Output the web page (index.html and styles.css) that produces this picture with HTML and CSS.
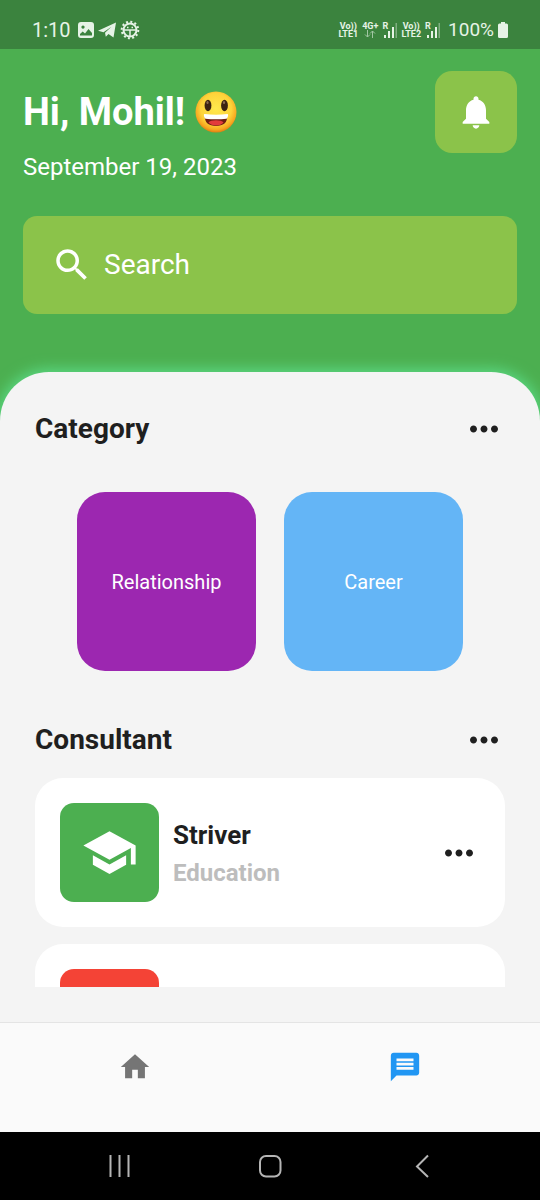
FILE: index.html
```html
<!DOCTYPE html>
<html lang="en">
<head>
<meta charset="utf-8">
<meta name="viewport" content="width=device-width, initial-scale=1">
<title>Consultants</title>
<link rel="stylesheet" href="styles.css">
</head>
<body>
<svg class="defs" aria-hidden="true">
  <symbol id="more" viewBox="0 0 24 24"><path d="M6 10c-1.1 0-2 .9-2 2s.9 2 2 2 2-.9 2-2-.9-2-2-2zm12 0c-1.1 0-2 .9-2 2s.9 2 2 2 2-.9 2-2-.9-2-2-2zm-6 0c-1.1 0-2 .9-2 2s.9 2 2 2 2-.9 2-2-.9-2-2-2z"/></symbol>
  <symbol id="bars" viewBox="0 0 14 16"><path d="M1 13h2v3H1zM5 9h2v7H5zM9 5h2v11H9z"/><path opacity=".4" d="M12.500 1h1.500v15h-1.500z"/></symbol>
</svg>
<div class="app">
  <div class="status">
    <div class="status-left">
      <span class="clock">1:10</span>
      <svg width="16" height="16" viewBox="0 0 16 16"><path fill-rule="evenodd" d="M3 0h10a3 3 0 0 1 3 3v10a3 3 0 0 1-3 3H3a3 3 0 0 1-3-3V3a3 3 0 0 1 3-3zm2 3.500a1.600 1.600 0 1 0 .01 0zM2 13.500h12V11l-3.500-4L7 11.500 4.700 9.500 2 12z"/></svg>
      <svg width="18" height="16" viewBox="0 0 18 16"><path d="M0 8.800 18 .5 15.500 15.500 10.500 12 7.800 14.800 7 10.800 13.500 4.800 5.500 10.200z"/></svg>
      <svg width="20" height="20" viewBox="0 0 20 20" fill="none" stroke="currentColor"><circle cx="10" cy="10" r="6.500" stroke-width="2"/><circle cx="10" cy="10" r="8.300" stroke-width="2" stroke-dasharray="2 2.350"/><path stroke-width="1.500" d="M4 10h12M10 10v6M7 7.500h1.500M11.500 7.500H13"/></svg>
    </div>
    <div class="status-right">
      <span class="net"><span>Vo))</span><span>LTE1</span></span>
      <span class="net"><span>4G+</span><svg width="12" height="8" viewBox="0 0 12 8" fill="none" stroke="currentColor" opacity=".6"><path d="M3.500 0v7M1 4.500 3.500 7 6 4.500M8.500 8V1M6 3.500 8.500 1 11 3.500"/></svg></span>
      <span class="signal"><span class="roam">R</span><svg width="14" height="16"><use href="#bars"/></svg></span>
      <span class="net"><span>Vo))</span><span>LTE2</span></span>
      <span class="signal"><span class="roam">R</span><svg width="14" height="16"><use href="#bars"/></svg></span>
      <span class="level">100%</span>
      <svg width="10" height="16" viewBox="0 0 10 16"><path d="M3 0h4v1.500h1.500A1.500 1.500 0 0 1 10 3v11.500A1.500 1.500 0 0 1 8.500 16h-7A1.500 1.500 0 0 1 0 14.500V3a1.500 1.500 0 0 1 1.500-1.500H3z"/></svg>
    </div>
  </div>

  <header class="header">
    <div class="greeting">
      <div>
        <h1 class="hello">Hi, Mohil!
          <svg width="42" height="42" viewBox="0 0 42 42" role="img" aria-label="grinning face">
            <defs><radialGradient id="face" cx=".5" cy=".42" r=".58"><stop offset="0" stop-color="#ffe94d"/><stop offset=".65" stop-color="#fdd33a"/><stop offset=".88" stop-color="#f7a61f"/><stop offset="1" stop-color="#e07d12"/></radialGradient></defs>
            <circle cx="21" cy="21" r="20.500" fill="url(#face)"/>
            <ellipse cx="13" cy="14.500" rx="3.400" ry="5.800" fill="#3b2412"/><ellipse cx="29.500" cy="14.500" rx="3.400" ry="5.800" fill="#3b2412"/>
            <ellipse cx="12.500" cy="11.500" rx="1.100" ry="1.500" fill="#8a6a50"/><ellipse cx="29" cy="11.500" rx="1.100" ry="1.500" fill="#8a6a50"/>
            <path fill="#6d1d12" d="M10 24.500h22c1 7-4 10.500-11 10.500S9 31.500 10 24.500z"/>
            <path fill="#e23b3b" d="M13.500 31.500c2-3 13-3 15 0-1.500 2-4.500 3-7.500 3s-6-1-7.500-3z"/>
            <path fill="#fff" d="M9.500 23q11.500 1.500 23 0 .8 0 .6 1.500c-.2 1.500-.8 2.700-1.600 3.200q-10.500 1-21 0c-.8-.5-1.400-1.700-1.600-3.200q-.2-1.500.6-1.500z"/>
          </svg>
        </h1>
        <p class="date">September 19, 2023</p>
      </div>
      <button class="bell" type="button" aria-label="Notifications"><svg width="40" height="40" viewBox="0 0 24 24"><path d="M12 22c1.100 0 2-.9 2-2h-4c0 1.100.89 2 2 2zm6-6v-5c0-3.070-1.640-5.640-4.500-6.320V4c0-.83-.67-1.500-1.500-1.500s-1.500.67-1.500 1.500v.68C7.630 5.360 6 7.920 6 11v5l-2 2v1h16v-1l-2-2z"/></svg></button>
    </div>
    <label class="search">
      <svg width="42" height="42" viewBox="0 0 24 24"><path d="M15.500 14h-.79l-.28-.27C15.410 12.590 16 11.110 16 9.500 16 5.910 13.090 3 9.500 3S3 5.910 3 9.500 5.910 16 9.500 16c1.610 0 3.090-.59 4.230-1.570l.27.28v.79l5 4.990L20.490 19l-4.990-5zm-6 0C7.010 14 5 11.990 5 9.500S7.010 5 9.500 5 14 7.010 14 9.500 11.990 14 9.500 14z"/></svg>
      <input type="text" placeholder="Search" aria-label="Search">
    </label>
  </header>

  <main class="sheet">
    <div class="section-head">
      <h2>Category</h2>
      <button class="more" type="button" aria-label="More categories"><svg width="42" height="42"><use href="#more"/></svg></button>
    </div>
    <div class="categories">
      <button class="category relationship" type="button">Relationship</button>
      <button class="category career" type="button">Career</button>
    </div>
    <div class="section-head">
      <h2>Consultant</h2>
      <button class="more" type="button" aria-label="More consultants"><svg width="42" height="42"><use href="#more"/></svg></button>
    </div>
    <div class="list">
      <article class="card">
        <div class="tile education"><svg width="57" height="57" viewBox="0 0 24 24"><path d="M5 13.180v4L12 21l7-3.820v-4L12 17l-7-3.820zM12 3L1 9l11 6 9-4.910V17h2V9L12 3z"/></svg></div>
        <div class="info">
          <h3>Striver</h3>
          <p>Education</p>
        </div>
        <button class="more" type="button" aria-label="More about Striver"><svg width="42" height="42"><use href="#more"/></svg></button>
      </article>
      <article class="card">
        <div class="tile alert"></div>
      </article>
    </div>
  </main>

  <nav class="tabs">
    <button class="tab" type="button" aria-label="Home"><svg width="34" height="34" viewBox="0 0 24 24"><path d="M10 20v-6h4v6h5v-8h3L12 3 2 12h3v8z"/></svg></button>
    <button class="tab active" type="button" aria-label="Messages"><svg width="34" height="34" viewBox="0 0 24 24"><path d="M20 2H4c-1.100 0-1.990.9-1.990 2L2 22l4-4h14c1.100 0 2-.9 2-2V4c0-1.100-.9-2-2-2zm-2 12H6v-2h12v2zm0-3H6V9h12v2zm0-3H6V6h12v2z"/></svg></button>
  </nav>

  <div class="system">
    <button type="button" aria-label="Recent apps"><svg width="24" height="24" viewBox="0 0 24 24"><path d="M4.500 1v22M13.500 1v22M22.500 1v22"/></svg></button>
    <button type="button" aria-label="Home screen"><svg width="24" height="24" viewBox="0 0 24 24"><rect x="2" y="2" width="20.500" height="20.500" rx="6"/></svg></button>
    <button type="button" aria-label="Back"><svg width="24" height="24" viewBox="0 0 24 24"><path d="M18 1.500 7 12.500 18 23"/></svg></button>
  </div>
</div>
</body>
</html>
```
FILE: styles.css
```css
* {
  box-sizing: border-box;
  margin: 0;
  padding: 0;
}

body {
  font-family: Roboto, sans-serif;
  color: #1f1f1f;
  background: #4caf50;
}

button {
  border: 0;
  background: none;
  font: inherit;
  color: inherit;
  cursor: pointer;
}

svg {
  display: block;
  flex: none;
  fill: currentColor;
}

svg[fill="none"] {
  fill: none;
}

.defs {
  display: none;
}

.app {
  display: flex;
  flex-direction: column;
  height: 100vh;
}

.status {
  display: flex;
  align-items: center;
  justify-content: space-between;
  padding: 18px 32px 7px;
  background: #3b833e;
  color: #e6f3e6;
}

.status-left,
.status-right {
  display: flex;
  align-items: center;
  gap: 4px;
  height: 24px;
}

.clock,
.level {
  font-size: 20px;
  line-height: 24px;
}

.clock {
  margin-right: 3px;
}

.level {
  margin-left: 4px;
  font-size: 19px;
}

.net {
  display: flex;
  flex-direction: column;
  align-items: center;
  font-size: 9px;
  font-weight: 700;
  line-height: 8px;
}

.signal {
  display: flex;
}

.roam {
  width: 1px;
  font-size: 9px;
  font-weight: 700;
  line-height: 8px;
}

.header {
  padding: 22px 23px 58px;
  color: #fff;
}

.greeting {
  display: flex;
  align-items: flex-start;
  justify-content: space-between;
}

.hello {
  display: flex;
  align-items: center;
  gap: 10px;
  margin-top: 19px;
  font-size: 38px;
  font-weight: 700;
  line-height: 44px;
}

.date {
  margin-top: 19px;
  font-size: 24px;
  line-height: 28px;
}

.bell {
  display: grid;
  place-items: center;
  width: 82px;
  height: 82px;
  border-radius: 17px;
  background: #8bc34a;
}

.search {
  display: flex;
  align-items: center;
  gap: 11px;
  margin-top: 35px;
  padding: 28px;
  border-radius: 14px;
  background: #8bc34a;
}

.search input {
  flex: 1;
  min-width: 0;
  border: 0;
  outline: 0;
  background: none;
  font: 28px/34px Roboto, sans-serif;
  color: #fff;
}

.search input::placeholder {
  color: #fff;
  opacity: 1;
}

.sheet {
  display: flex;
  flex: 1;
  flex-direction: column;
  min-height: 0;
  padding: 36px 35px 35px;
  border-radius: 49px 49px 0 0;
  background: #f4f4f4;
  box-shadow: 0 0 14px 3px #5bd984;
}

.section-head {
  display: flex;
  align-items: center;
  justify-content: space-between;
}

h2 {
  font-size: 28px;
  line-height: 42px;
}

.categories {
  display: flex;
  justify-content: center;
  gap: 28px;
  margin: 42px 0 48px;
}

.category {
  width: 179px;
  height: 179px;
  border-radius: 28px;
  font-size: 20px;
  color: #fff;
}

.relationship {
  background: #9c27b0;
}

.career {
  background: #64b5f6;
}

.list {
  display: flex;
  flex: 1;
  flex-direction: column;
  gap: 17px;
  min-height: 0;
  margin-top: 17px;
  overflow-y: auto;
  scrollbar-width: none;
}

.card {
  display: flex;
  flex: none;
  align-items: center;
  gap: 14px;
  padding: 25px;
  border-radius: 28px;
  background: #fff;
}

.tile {
  display: grid;
  place-items: center;
  width: 99px;
  height: 99px;
  border-radius: 14px;
  color: #fff;
}

.education {
  background: #4caf50;
}

.alert {
  background: #f44336;
}

.info {
  flex: 1;
}

h3 {
  font-size: 26px;
  line-height: 32px;
}

.info p {
  margin-top: 8px;
  font-size: 24px;
  font-weight: 700;
  line-height: 28px;
  color: #bdbdbd;
}

.tabs {
  display: flex;
  padding: 27px 0 48px;
  border-top: 1px solid #e4e4e4;
  background: #fafafa;
  color: #757575;
}

.tab {
  display: flex;
  flex: 1;
  justify-content: center;
}

.active {
  color: #2196f3;
}

.system {
  display: flex;
  justify-content: space-between;
  padding: 22px 106px;
  background: #000;
}

.system svg {
  fill: none;
  stroke: #b5b5b5;
  stroke-width: 2;
}
```
